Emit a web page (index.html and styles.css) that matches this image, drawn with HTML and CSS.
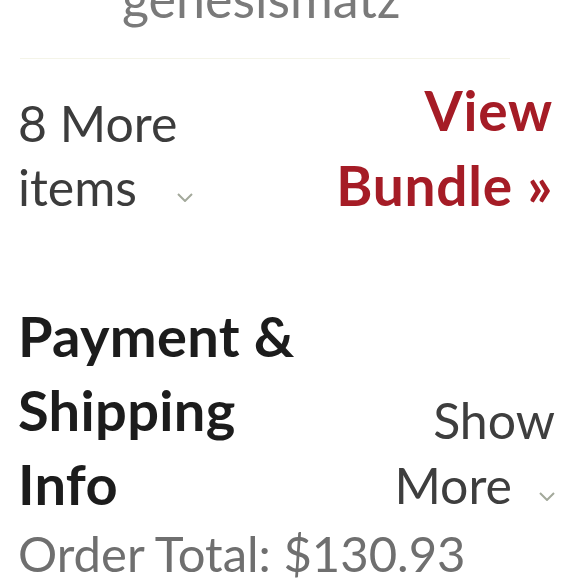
FILE: index.html
```html
<!DOCTYPE html>
<html>
<head>
<meta charset="utf-8">
<link rel="stylesheet" href="styles.css">
</head>
<body>
<div class="page">
  <div class="user">genesismatz</div>
  <div class="rule"></div>
  <div class="bundle-row">
    <div class="more-items">
      <span class="line">8 More</span>
      <span class="line">items<svg class="chev chev-items" viewBox="0 0 16 9" width="16" height="9"><polyline points="1,1 8,8 15,1" fill="none" stroke="#a3a99b" stroke-width="2"/></svg></span>
    </div>
    <div class="view-bundle">
      <span class="line">View</span>
      <span class="line">Bundle&nbsp;»</span>
    </div>
  </div>
  <div class="pay-row">
    <div class="pay-title">
      <span class="line">Payment &amp;</span>
      <span class="line">Shipping</span>
      <span class="line">Info</span>
    </div>
    <div class="show-more">
      <span class="line">Show</span>
      <span class="line">More<svg class="chev chev-more" viewBox="0 0 16 9" width="16" height="9"><polyline points="1,1 8,8 15,1" fill="none" stroke="#a3a99b" stroke-width="2"/></svg></span>
    </div>
  </div>
  <div class="total">Order Total: $130.93</div>
</div>
</body>
</html>
```
FILE: styles.css
```css
html, body {
  margin: 0;
  padding: 0;
  background: #ffffff;
}
body {
  font-family: "Lato", "Liberation Sans", sans-serif;
  overflow: hidden;
}
.page {
  width: 580px;
  height: 580px;
  overflow: hidden;
}
.line {
  display: block;
  white-space: nowrap;
}
.user {
  margin-top: -32px;
  padding-left: 122px;
  font-size: 52px;
  line-height: 60px;
  color: #7a7a7a;
}
.rule {
  height: 1px;
  margin: 30px 70px 0 20px;
  background: #f4f4e8;
}
.bundle-row {
  display: flex;
  justify-content: space-between;
  align-items: flex-start;
  margin-top: 14px;
  padding: 0 27px 0 18px;
}
.more-items {
  margin-top: 18px;
  font-size: 50px;
  line-height: 64px;
  color: #3c3c3c;
}
.chev {
  display: inline-block;
}
.chev-items {
  margin-left: 40px;
  vertical-align: 4px;
}
.view-bundle {
  text-align: right;
  font-size: 55px;
  line-height: 75px;
  font-weight: 700;
  letter-spacing: 0.8px;
  color: #a51c26;
}
.pay-row {
  display: flex;
  justify-content: space-between;
  align-items: flex-end;
  margin-top: 76px;
  padding: 0 25px 0 18px;
}
.pay-title {
  font-size: 56px;
  line-height: 74px;
  font-weight: 700;
  letter-spacing: 0.3px;
  color: #1c1c1c;
}
.show-more {
  margin-bottom: 3px;
  text-align: right;
  font-size: 50px;
  line-height: 65px;
  color: #3e3e3e;
}
.chev-more {
  margin-left: 27px;
  vertical-align: 3px;
}
.total {
  margin-top: 2px;
  padding-left: 18px;
  font-size: 49px;
  line-height: 60px;
  color: #6f6f6f;
}
```
